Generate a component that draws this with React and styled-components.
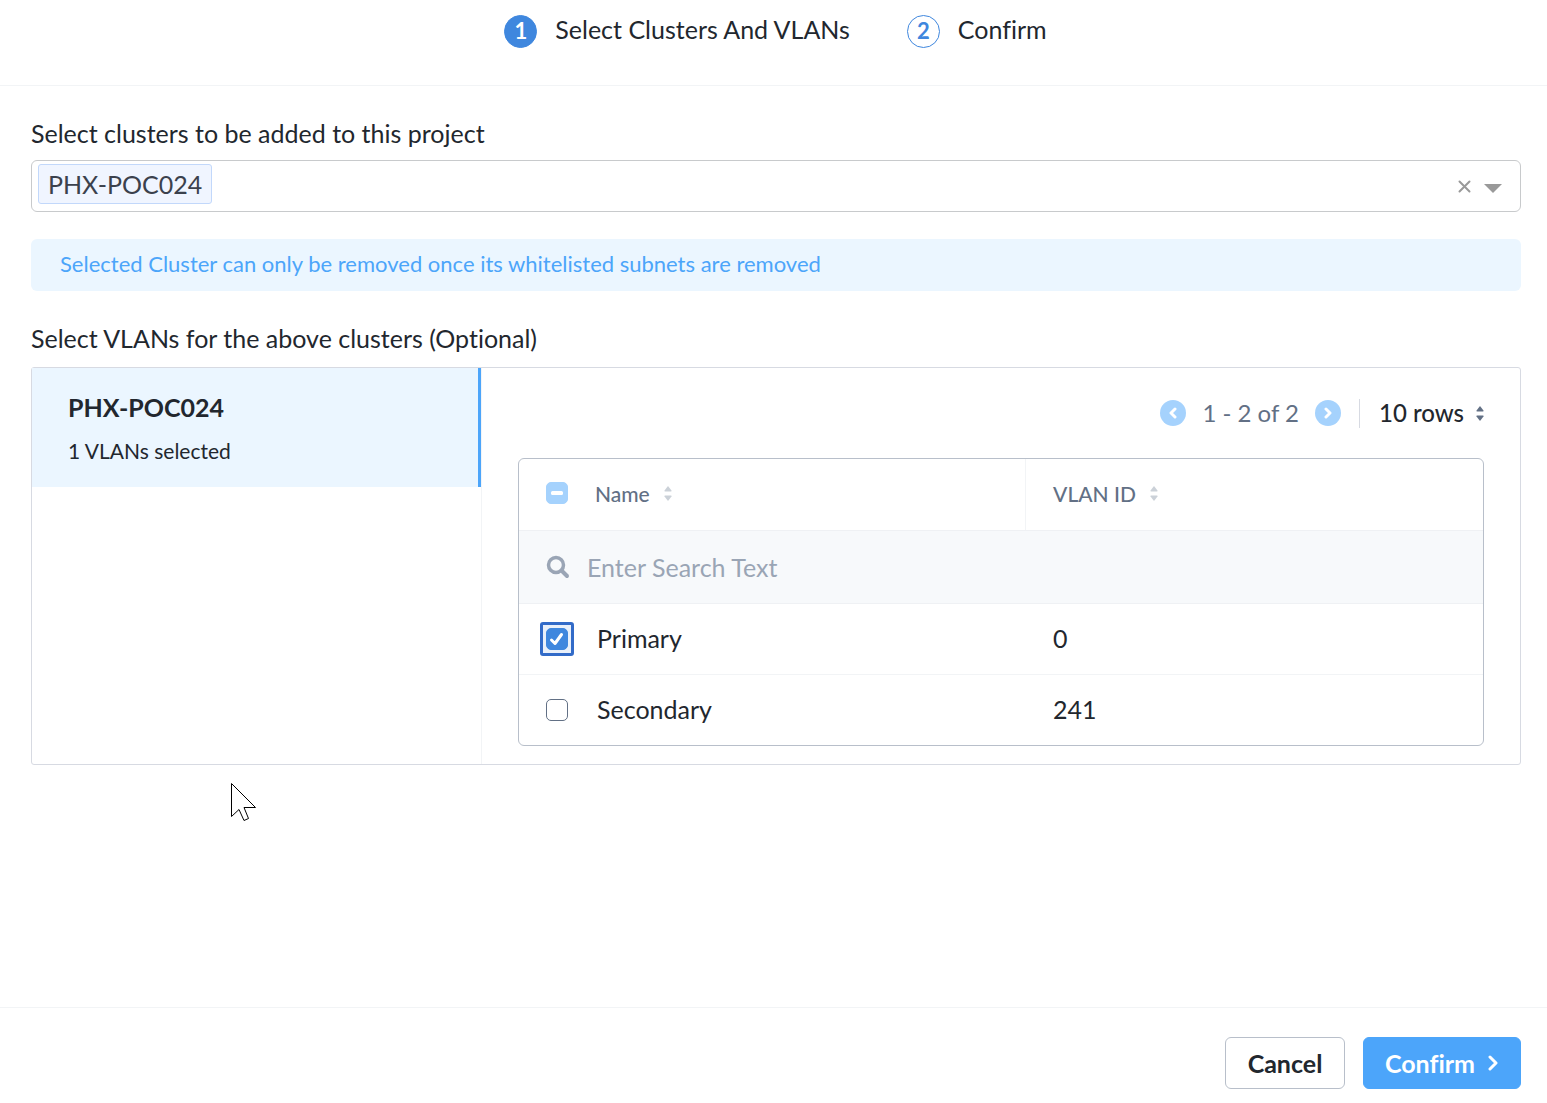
import React, { useEffect, useRef, useState } from "react";
import styled, { createGlobalStyle, css } from "styled-components";

const GlobalStyle = createGlobalStyle`
  *, *::before, *::after { box-sizing: border-box; }
  body {
    margin: 0;
    background: #ffffff;
    color: #22272e;
    font-family: Lato, "Liberation Sans", sans-serif;
    font-size: 25px;
    line-height: 32px;
    font-variant-ligatures: none;
  }
  button, input, select { font: inherit; font-variant-ligatures: none; color: inherit; }
`;

const Page = styled.div`
  position: relative;
  display: flex;
  flex-direction: column;
  min-height: 100vh;
`;

const Header = styled.header`
  padding: 13px 0 37px;
  border-bottom: 1px solid #f2f4f6;
`;

const Steps = styled.ol`
  display: flex;
  justify-content: center;
  gap: 57px;
  margin: 0;
  padding: 0 0 0 4px;
  list-style: none;
`;

const Step = styled.li`
  display: flex;
  align-items: flex-start;
  gap: 18px;
`;

const StepNumber = styled.span`
  display: flex;
  align-items: center;
  justify-content: center;
  width: 33px;
  height: 33px;
  margin-top: 2px;
  padding-bottom: 2px;
  border: 1px solid #3f87de;
  border-radius: 50%;
  background: ${(p) => (p.$active ? "#3f87de" : "#ffffff")};
  color: ${(p) => (p.$active ? "#ffffff" : "#3f87de")};
  font-size: 22px;
  font-weight: 700;
  line-height: 24px;
`;

const Main = styled.main`
  flex: 1;
  padding: 31px 26px 32px 31px;
`;

const FieldLabel = styled.label`
  display: block;
  margin-bottom: 11px;
`;

const Heading = styled.h2`
  margin: 0 0 13px;
  font-size: 25px;
  font-weight: 400;
`;

const Combo = styled.div`
  display: flex;
  align-items: center;
  height: 52px;
  padding: 0 18px 0 6px;
  border: 1px solid #c8cacc;
  border-radius: 6px;
`;

const Tag = styled.span`
  height: 40px;
  margin-bottom: 4px;
  padding: 3px 9px;
  border: 1px solid #c2d8fb;
  border-radius: 3px;
  background: #f0f5ff;
  color: #3b414d;
`;

const ComboInput = styled.input`
  flex: 1;
  min-width: 0;
  height: 40px;
  padding: 0 8px;
  border: 0;
  outline: 0;
  background: none;
`;

const IconButton = styled.button`
  display: flex;
  align-items: center;
  justify-content: center;
  padding: 0;
  border: 0;
  background: none;
  color: #999999;
  cursor: pointer;
`;

const ComboIcons = styled.div`
  display: flex;
  align-items: center;
  gap: 13px;
`;

const Notice = styled.p`
  margin: 27px 0 31px;
  padding: 9px 29px 11px;
  border-radius: 6px;
  background: #ebf6ff;
  color: #4ca5fa;
  font-size: 22px;
`;

const Panel = styled.section`
  display: flex;
  min-height: 398px;
  border: 1px solid #d7dae2;
  border-radius: 3px;
`;

const ClusterList = styled.nav`
  flex: 0 0 450px;
  border-right: 1px solid #f2f4f6;
`;

const ClusterItem = styled.button`
  display: flex;
  flex-direction: column;
  gap: 12px;
  width: 100%;
  height: 119px;
  padding: 23px 36px 0;
  border: 0;
  border-right: 3px solid #4ca5fa;
  background: #ebf6ff;
  text-align: left;
  cursor: pointer;
`;

const ClusterName = styled.span`
  font-weight: 700;
`;

const ClusterCount = styled.span`
  font-size: 21px;
`;

const VlanArea = styled.div`
  flex: 1;
  min-width: 0;
  padding: 29px 36px 18px;
`;

const Pager = styled.div`
  display: flex;
  align-items: center;
  justify-content: flex-end;
  margin-bottom: 29px;
  font-size: 24px;
`;

const PageButton = styled.button`
  display: flex;
  align-items: center;
  justify-content: center;
  width: 26px;
  height: 26px;
  padding: 0;
  border: 0;
  border-radius: 50%;
  background: #a5d2fd;
  color: #ffffff;
`;

const PageRange = styled.span`
  padding: 0 16px;
  color: #627085;
`;

const RowsPicker = styled.div`
  display: flex;
  align-items: center;
  height: 29px;
  margin-left: 18px;
  padding-left: 19px;
  border-left: 1px solid #d7dae2;
  color: #627085;
`;

const RowsSelect = styled.select`
  height: 32px;
  width: 97px;
  padding: 0;
  border: 0;
  outline: 0;
  appearance: none;
  background: none;
  color: #22272e;
  font-weight: 500;
`;

const TableFrame = styled.div`
  overflow: hidden;
  border: 1px solid #b8bfca;
  border-radius: 6px;
`;

const Table = styled.table`
  width: 100%;
  border-collapse: separate;
  border-spacing: 0;
  table-layout: fixed;
`;

const CheckCol = styled.col`
  width: 76px;
`;

const IdCol = styled.col`
  width: 47.5%;
`;

const cell = css`
  height: 71px;
  padding: 0 0 2px;
  text-align: left;
  vertical-align: middle;
`;

const HeadCell = styled.th`
  ${cell}
  padding-left: ${(p) => (p.$inset ? "27px" : "0")};
  border-left: ${(p) => (p.$inset ? "1px solid #f2f4f6" : "0")};
  color: #627085;
  font-size: 21px;
  font-weight: 500;
`;

const SortButton = styled.button`
  display: flex;
  align-items: center;
  gap: 14px;
  padding: 0;
  border: 0;
  background: none;
  cursor: pointer;
`;

const SearchCell = styled.td`
  height: 74px;
  padding: 0 27px;
  border-top: 1px solid #eff1f4;
  border-bottom: 1px solid #eff1f4;
  background: #f7f9fb;
`;

const SearchField = styled.label`
  display: flex;
  align-items: center;
  gap: 17px;
  color: #9aa5b5;
`;

const SearchInput = styled.input`
  flex: 1;
  min-width: 0;
  height: 32px;
  padding: 0;
  border: 0;
  outline: 0;
  background: none;
  color: #22272e;
  &::placeholder { color: #9aa5b5; opacity: 1; }
`;

const Cell = styled.td`
  ${cell}
  height: ${(p) => (p.$last ? "70px" : "71px")};
  padding-left: ${(p) => (p.$inset ? "28px" : "2px")};
  border-bottom: ${(p) => (p.$last ? "0" : "1px solid #f2f4f6")};
`;

const CheckCell = styled(Cell)`
  padding: 0 0 0 27px;
`;

const CheckHeadCell = styled.th`
  ${cell}
  padding: 0 0 4px 27px;
`;

const CheckWrap = styled.span`
  display: grid;
  width: 22px;
  height: 22px;
  color: #ffffff;
  & > * { grid-area: 1 / 1; }
  & > svg { pointer-events: none; }
  ${(p) =>
    p.$ring &&
    css`
      width: 34px;
      height: 34px;
      margin: -6px;
      padding: 3px;
      border: 3px solid #326bc8;
      border-radius: 3px;
      background: #e9f0fa;
    `}
`;

const Checkbox = styled.input`
  width: 22px;
  height: 22px;
  margin: 0;
  appearance: none;
  border: 1px solid #627085;
  border-radius: 5px;
  background: #ffffff;
  cursor: pointer;
  &:checked { border-color: #3f87de; background: #3f87de; }
  &:indeterminate { border-color: #a5d2fd; background: #a5d2fd; }
`;

const Footer = styled.footer`
  display: flex;
  justify-content: flex-end;
  gap: 18px;
  padding: 29px 26px 14px;
  border-top: 1px solid #f2f4f6;
`;

const Button = styled.button`
  display: flex;
  align-items: center;
  justify-content: center;
  gap: 13px;
  height: 52px;
  min-width: ${(p) => (p.$primary ? "158px" : "120px")};
  padding: 0 18px;
  border: 1px solid ${(p) => (p.$primary ? "#4ca5fa" : "#b8bfca")};
  border-radius: 6px;
  background: ${(p) => (p.$primary ? "#4ca5fa" : "#ffffff")};
  color: ${(p) => (p.$primary ? "#ffffff" : "#22272e")};
  font-weight: 700;
  cursor: pointer;
`;

const Pointer = styled.svg`
  position: absolute;
  top: 782px;
  left: 230px;
  pointer-events: none;
`;

const SortIcon = ({ color = "#cbd1d8" }) => (
  <svg width="8" height="15" viewBox="0 0 8 15" fill={color} aria-hidden="true">
    <path d="M4 0 7.5 4.6Q7.7 5.5 7 5.5H1Q.3 5.5.5 4.6Z" />
    <path d="M4 15 .5 10.4Q.3 9.5 1 9.5H7Q7.7 9.5 7.5 10.4Z" />
  </svg>
);

const Chevron = ({ d, width, height, stroke = 3 }) => (
  <svg width={width} height={height} viewBox={`0 0 ${width} ${height}`} fill="none" aria-hidden="true">
    <path d={d} stroke="currentColor" strokeWidth={stroke} strokeLinecap="round" strokeLinejoin="round" />
  </svg>
);

function Tick({ id, label, checked, onChange, ring }) {
  return (
    <CheckWrap $ring={ring}>
      <Checkbox id={id} type="checkbox" aria-label={label} checked={checked} onChange={onChange} />
      {checked && (
        <svg width="22" height="22" viewBox="0 0 22 22" fill="none" aria-hidden="true">
          <path d="M5.5 12 9 15.500 15.5 6.500" stroke="currentColor" strokeWidth="3" strokeLinecap="round" strokeLinejoin="round" />
        </svg>
      )}
    </CheckWrap>
  );
}

function TickAll({ some, all, onChange }) {
  const ref = useRef(null);
  useEffect(() => {
    ref.current.indeterminate = some && !all;
  }, [some, all]);
  return (
    <CheckWrap>
      <Checkbox ref={ref} type="checkbox" aria-label="Select all VLANs" checked={all} onChange={onChange} />
      {some && (
        <svg width="22" height="22" viewBox="0 0 22 22" aria-hidden="true">
          <rect x="5" y="9" width="12" height="4" rx="1.5" fill="currentColor" />
        </svg>
      )}
    </CheckWrap>
  );
}

const vlans = [
  { name: "Primary", id: "0" },
  { name: "Secondary", id: "241" },
];

export default function App() {
  const [selected, setSelected] = useState(["Primary"]);
  const toggle = (name) =>
    setSelected((s) => (s.includes(name) ? s.filter((n) => n !== name) : [...s, name]));
  const all = selected.length === vlans.length;

  return (
    <Page>
      <GlobalStyle />
      <Header>
        <Steps>
          <Step aria-current="step">
            <StepNumber $active>1</StepNumber>
            <span>Select Clusters And VLANs</span>
          </Step>
          <Step>
            <StepNumber>2</StepNumber>
            <span>Confirm</span>
          </Step>
        </Steps>
      </Header>

      <Main>
        <FieldLabel htmlFor="clusters">Select clusters to be added to this project</FieldLabel>
        <Combo>
          <Tag>PHX-POC024</Tag>
          <ComboInput id="clusters" type="text" />
          <ComboIcons>
            <IconButton type="button" aria-label="Clear clusters">
              <Chevron width={13} height={13} stroke={2} d="M1.5 1.5 11.5 11.5M11.5 1.5 1.5 11.5" />
            </IconButton>
            <IconButton type="button" aria-label="Open cluster list">
              <svg width="18" height="13" viewBox="0 0 18 13" fill="currentColor" aria-hidden="true">
                <path d="M0 4H18L9 13Z" />
              </svg>
            </IconButton>
          </ComboIcons>
        </Combo>

        <Notice>Selected Cluster can only be removed once its whitelisted subnets are removed</Notice>

        <Heading>Select VLANs for the above clusters (Optional)</Heading>
        <Panel>
          <ClusterList>
            <ClusterItem type="button">
              <ClusterName>PHX-POC024</ClusterName>
              <ClusterCount>{selected.length} VLANs selected</ClusterCount>
            </ClusterItem>
          </ClusterList>

          <VlanArea>
            <Pager>
              <PageButton type="button" aria-label="Previous page">
                <Chevron width={8} height={12} d="M6 2 2 6 6 10" />
              </PageButton>
              <PageRange>1 - 2 of 2</PageRange>
              <PageButton type="button" aria-label="Next page">
                <Chevron width={8} height={12} d="M2 2 6 6 2 10" />
              </PageButton>
              <RowsPicker>
                <RowsSelect aria-label="Rows per page" defaultValue="10">
                  <option value="10">10 rows</option>
                  <option value="20">20 rows</option>
                </RowsSelect>
                <SortIcon color="#627085" />
              </RowsPicker>
            </Pager>

            <TableFrame>
              <Table>
                <colgroup>
                  <CheckCol />
                  <col />
                  <IdCol />
                </colgroup>
                <thead>
                  <tr>
                    <CheckHeadCell>
                      <TickAll
                        some={selected.length > 0}
                        all={all}
                        onChange={() => setSelected(all ? [] : vlans.map((v) => v.name))}
                      />
                    </CheckHeadCell>
                    <HeadCell>
                      <SortButton type="button">Name <SortIcon /></SortButton>
                    </HeadCell>
                    <HeadCell $inset>
                      <SortButton type="button">VLAN ID <SortIcon /></SortButton>
                    </HeadCell>
                  </tr>
                </thead>
                <tbody>
                  <tr>
                    <SearchCell colSpan={3}>
                      <SearchField>
                        <svg width="24" height="24" viewBox="0 0 24 24" fill="none" stroke="currentColor" aria-hidden="true">
                          <circle cx="10" cy="10" r="7.5" strokeWidth="3.5" />
                          <path d="M15.5 15.5 21 21" strokeWidth="4" strokeLinecap="round" />
                        </svg>
                        <SearchInput type="text" placeholder="Enter Search Text" />
                      </SearchField>
                    </SearchCell>
                  </tr>
                  {vlans.map((v, i) => {
                    const last = i === vlans.length - 1;
                    return (
                      <tr key={v.name}>
                        <CheckCell $last={last}>
                          <Tick
                            id={`vlan-${v.id}`}
                            label={v.name}
                            checked={selected.includes(v.name)}
                            onChange={() => toggle(v.name)}
                            ring={i === 0}
                          />
                        </CheckCell>
                        <Cell $last={last}>
                          <label htmlFor={`vlan-${v.id}`}>{v.name}</label>
                        </Cell>
                        <Cell $last={last} $inset>{v.id}</Cell>
                      </tr>
                    );
                  })}
                </tbody>
              </Table>
            </TableFrame>
          </VlanArea>
        </Panel>
      </Main>

      <Footer>
        <Button type="button">Cancel</Button>
        <Button type="button" $primary>
          Confirm
          <Chevron width={11} height={16} d="M2 2 8 8 2 14" />
        </Button>
      </Footer>

      <Pointer width="28" height="42" viewBox="0 0 28 42" fill="#ffffff" stroke="#000000" aria-hidden="true">
        <path d="M1.5 1.5V34.5L9 27.5L14 38.5L18.500 36.500L14 25.500H25.500Z" />
      </Pointer>
    </Page>
  );
}
